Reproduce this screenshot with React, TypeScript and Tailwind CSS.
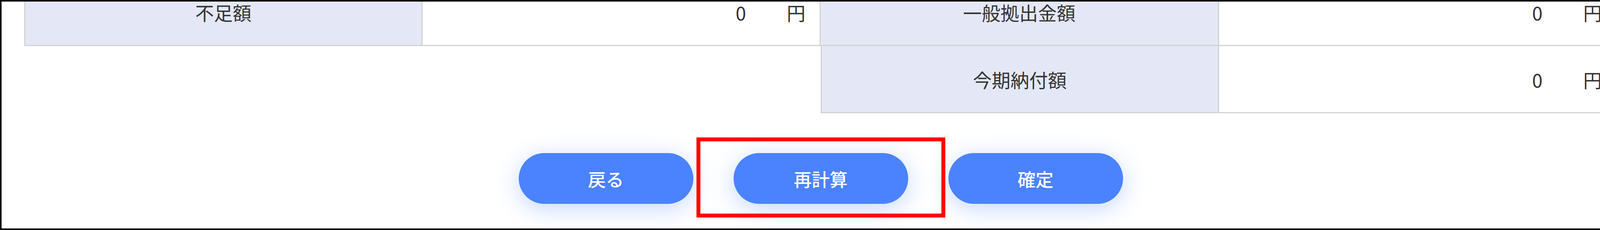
import React from "react";

const font = { fontFamily: '"Noto Sans CJK JP", "Noto Sans", sans-serif' };

type Row = { label: string; value: string } | null;

const LabelCell: React.FC<{ text: string; first?: boolean }> = ({ text, first }) => (
  <div
    className={
      "h-[172px] bg-[#e4e8f6] border-b-[3px] border-r-[3px] border-[#d2d2d2] flex items-center justify-center text-[48px] text-[#333333] " +
      (first ? "border-l-[3px]" : "")
    }
  >
    <span className="leading-none">{text}</span>
  </div>
);

const ValueCell: React.FC<{ value: string }> = ({ value }) => (
  <div className="h-[172px] bg-white border-b-[3px] border-r-[3px] border-[#d2d2d2] flex items-center justify-end gap-[104px] pr-[36px] text-[48px] text-[#333333]">
    <span className="leading-none">{value}</span>
    <span className="leading-none">円</span>
  </div>
);

const rows: [Row, Row][] = [
  [
    { label: "不足額", value: "0" },
    { label: "一般拠出金額", value: "0" },
  ],
  [null, { label: "今期納付額", value: "0" }],
];

const PillButton: React.FC<{ children: React.ReactNode }> = ({ children }) => (
  <button className="w-[447px] h-[130px] rounded-full bg-[#4b82fe] text-white text-[46px] font-medium shadow-[0_12px_60px_rgba(76,130,254,0.32)]">
    {children}
  </button>
);

export default function App() {
  return (
    <div
      className="w-[4202px] h-[589px] border-[4px] border-black bg-white overflow-hidden flex flex-col"
      style={font}
    >
      {/* Summary table (scrolled, top row partly cut) */}
      <div className="px-[58px] -mt-[58px]">
        <div className="grid grid-cols-4">
          {rows.map(([left, right], i) => (
            <React.Fragment key={i}>
              {left ? (
                <>
                  <LabelCell text={left.label} first />
                  <ValueCell value={left.value} />
                </>
              ) : (
                <>
                  <div className="h-[172px]" />
                  <div className="h-[172px]" />
                </>
              )}
              {right && (
                <>
                  <LabelCell text={right.label} first={!left} />
                  <ValueCell value={right.value} />
                </>
              )}
            </React.Fragment>
          ))}
        </div>
      </div>

      {/* Actions */}
      <div className="mt-[102px] flex justify-center gap-[103px]">
        <PillButton>戻る</PillButton>
        <div className="relative">
          <PillButton>再計算</PillButton>
          <span className="pointer-events-none absolute -left-[95px] -right-[95px] -top-[40px] -bottom-[35px] border-[10px] border-[#ff0000]" />
        </div>
        <PillButton>確定</PillButton>
      </div>
    </div>
  );
}
